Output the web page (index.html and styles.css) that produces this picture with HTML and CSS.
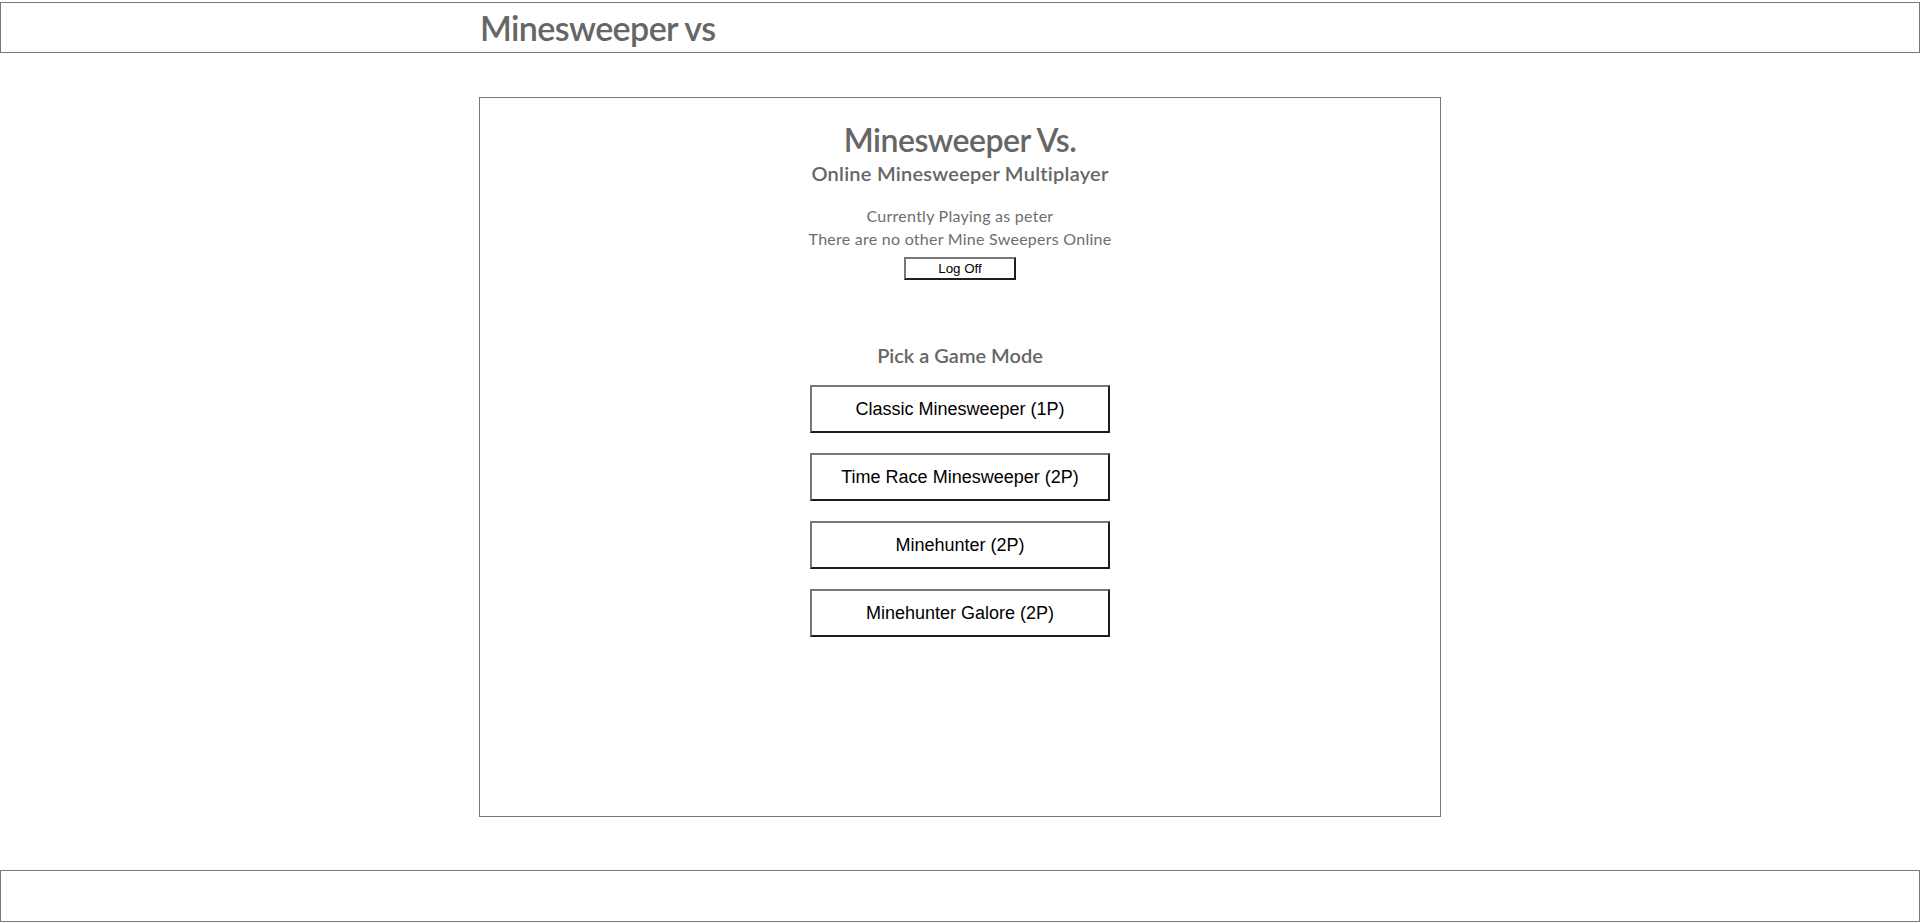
FILE: index.html
```html
<!DOCTYPE html>
<html lang="en">
<head>
<meta charset="utf-8">
<title>Minesweeper vs</title>
<link rel="stylesheet" href="styles.css">
</head>
<body>
<header class="site-header">
  <div class="header-inner">
    <h1 class="site-title">Minesweeper vs</h1>
  </div>
</header>
<main class="panel">
  <h2 class="title">Minesweeper Vs.</h2>
  <h3 class="subtitle">Online Minesweeper Multiplayer</h3>
  <p class="info first">Currently Playing as peter</p>
  <p class="info">There are no other Mine Sweepers Online</p>
  <button class="logoff" type="button">Log Off</button>
  <h3 class="pick">Pick a Game Mode</h3>
  <div class="modes">
    <button class="mode" type="button">Classic Minesweeper (1P)</button>
    <button class="mode" type="button">Time Race Minesweeper (2P)</button>
    <button class="mode" type="button">Minehunter (2P)</button>
    <button class="mode" type="button">Minehunter Galore (2P)</button>
  </div>
</main>
<footer class="site-footer"></footer>
</body>
</html>
```
FILE: styles.css
```css
html, body {
  margin: 0;
  padding: 0;
  background: #fff;
}
body {
  font-family: Lato, "Open Sans", sans-serif;
  color: #666;
}
.site-header {
  margin-top: 2px;
  height: 49px;
  border: 1px solid #777;
}
.header-inner {
  width: 960px;
  margin: 0 auto;
}
.site-title {
  margin: 0;
  font-size: 34px;
  font-weight: 600;
  letter-spacing: -0.6px;
  line-height: 49px;
  color: #666;
}
.panel {
  display: flex;
  flex-direction: column;
  align-items: center;
  box-sizing: border-box;
  width: 962px;
  height: 720px;
  margin: 44px auto 0;
  padding-top: 22px;
  border: 1px solid #777;
  text-align: center;
}
.title {
  margin: 0;
  font-size: 32px;
  font-weight: 600;
  letter-spacing: -0.5px;
  line-height: 40px;
}
.subtitle {
  margin: 0;
  font-size: 20px;
  font-weight: 600;
  letter-spacing: 0.25px;
  line-height: 26px;
}
.info {
  margin: 0;
  font-size: 16px;
  font-weight: 400;
  letter-spacing: 0.25px;
  line-height: 23px;
  color: #6e6e6e;
}
.info.first {
  margin-top: 18px;
}
button {
  font-family: "Liberation Sans", Arial, sans-serif;
  background: #fff;
  color: #000;
  border-style: solid;
  border-width: 2px;
  border-color: #767676 #1e1e1e #1e1e1e #767676;
  padding: 0;
  cursor: pointer;
}
.logoff {
  margin-top: 7px;
  width: 112px;
  height: 23px;
  font-size: 13.33px;
}
.pick {
  margin: 62px 0 0;
  font-size: 20px;
  font-weight: 600;
  line-height: 26px;
}
.modes {
  display: flex;
  flex-direction: column;
  gap: 20px;
  margin-top: 17px;
}
.mode {
  width: 300px;
  height: 48px;
  font-size: 18px;
}
.site-footer {
  margin-top: 53px;
  height: 50px;
  border: 1px solid #777;
}
```
